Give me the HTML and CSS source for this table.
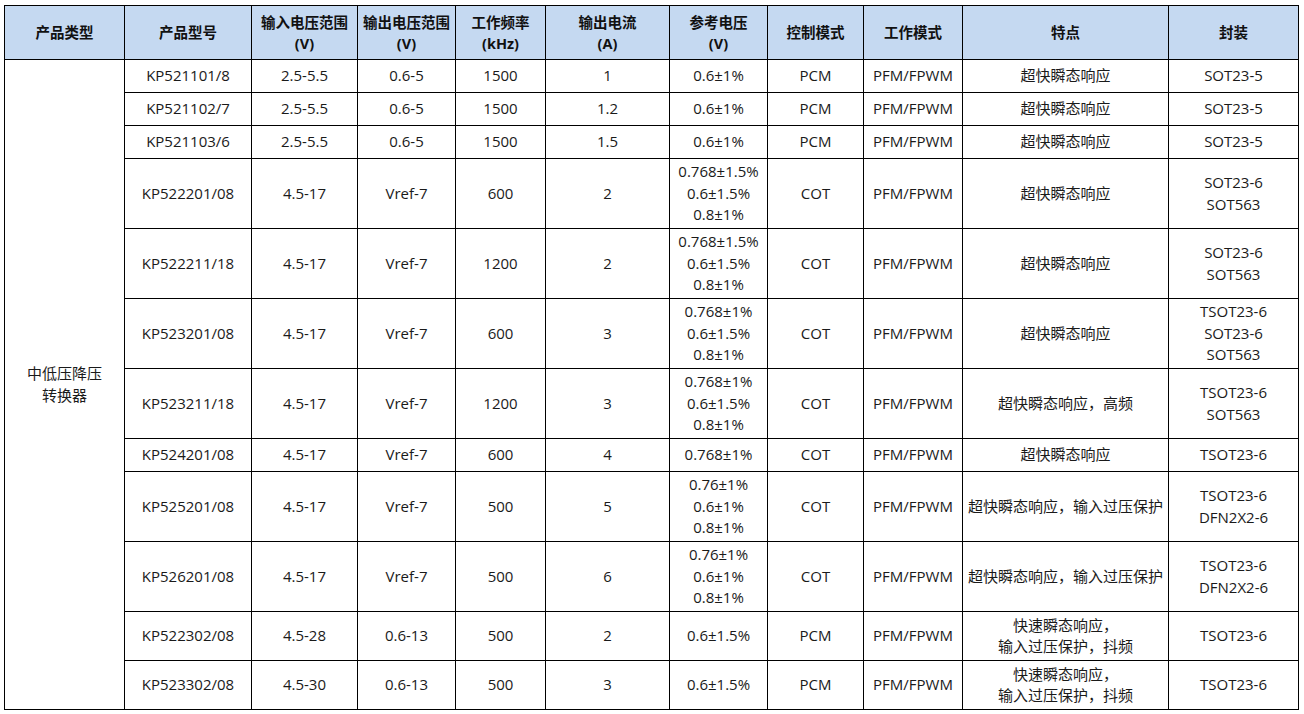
FILE: index.html
```html
<!DOCTYPE html>
<html lang="zh">
<head>
<meta charset="utf-8">
<title>中低压降压转换器</title>
<link rel="stylesheet" href="styles.css">
</head>
<body>
<table class="spec">
  <colgroup>
    <col class="c1"><col class="c2"><col class="c3"><col class="c4"><col class="c5"><col class="c6"><col class="c7"><col class="c8"><col class="c9"><col class="c10"><col class="c11">
  </colgroup>
  <thead>
    <tr class="hrow">
      <th>产品类型</th>
      <th>产品型号</th>
      <th>输入电压范围<br>(V)</th>
      <th>输出电压范围<br>(V)</th>
      <th>工作频率<br>(kHz)</th>
      <th>输出电流<br>(A)</th>
      <th>参考电压<br>(V)</th>
      <th>控制模式</th>
      <th>工作模式</th>
      <th>特点</th>
      <th>封装</th>
    </tr>
  </thead>
  <tbody>
    <tr class="r1">
      <td rowspan="13">中低压降压<br>转换器</td>
      <td>KP521101/8</td><td>2.5-5.5</td><td>0.6-5</td><td>1500</td><td>1</td><td>0.6±1%</td><td>PCM</td><td>PFM/FPWM</td><td>超快瞬态响应</td><td>SOT23-5</td>
    </tr>
    <tr class="r1">
      <td>KP521102/7</td><td>2.5-5.5</td><td>0.6-5</td><td>1500</td><td>1.2</td><td>0.6±1%</td><td>PCM</td><td>PFM/FPWM</td><td>超快瞬态响应</td><td>SOT23-5</td>
    </tr>
    <tr class="r1">
      <td>KP521103/6</td><td>2.5-5.5</td><td>0.6-5</td><td>1500</td><td>1.5</td><td>0.6±1%</td><td>PCM</td><td>PFM/FPWM</td><td>超快瞬态响应</td><td>SOT23-5</td>
    </tr>
    <tr class="r3">
      <td>KP522201/08</td><td>4.5-17</td><td>Vref-7</td><td>600</td><td>2</td><td>0.768±1.5%<br>0.6±1.5%<br>0.8±1%</td><td>COT</td><td>PFM/FPWM</td><td>超快瞬态响应</td><td>SOT23-6<br>SOT563</td>
    </tr>
    <tr class="r3">
      <td>KP522211/18</td><td>4.5-17</td><td>Vref-7</td><td>1200</td><td>2</td><td>0.768±1.5%<br>0.6±1.5%<br>0.8±1%</td><td>COT</td><td>PFM/FPWM</td><td>超快瞬态响应</td><td>SOT23-6<br>SOT563</td>
    </tr>
    <tr class="r3">
      <td>KP523201/08</td><td>4.5-17</td><td>Vref-7</td><td>600</td><td>3</td><td>0.768±1%<br>0.6±1.5%<br>0.8±1%</td><td>COT</td><td>PFM/FPWM</td><td>超快瞬态响应</td><td>TSOT23-6<br>SOT23-6<br>SOT563</td>
    </tr>
    <tr class="r3">
      <td>KP523211/18</td><td>4.5-17</td><td>Vref-7</td><td>1200</td><td>3</td><td>0.768±1%<br>0.6±1.5%<br>0.8±1%</td><td>COT</td><td>PFM/FPWM</td><td>超快瞬态响应，高频</td><td>TSOT23-6<br>SOT563</td>
    </tr>
    <tr class="r1">
      <td>KP524201/08</td><td>4.5-17</td><td>Vref-7</td><td>600</td><td>4</td><td>0.768±1%</td><td>COT</td><td>PFM/FPWM</td><td>超快瞬态响应</td><td>TSOT23-6</td>
    </tr>
    <tr class="r3">
      <td>KP525201/08</td><td>4.5-17</td><td>Vref-7</td><td>500</td><td>5</td><td>0.76±1%<br>0.6±1%<br>0.8±1%</td><td>COT</td><td>PFM/FPWM</td><td class="tight">超快瞬态响应，输入过压保护</td><td>TSOT23-6<br>DFN2X2-6</td>
    </tr>
    <tr class="r3">
      <td>KP526201/08</td><td>4.5-17</td><td>Vref-7</td><td>500</td><td>6</td><td>0.76±1%<br>0.6±1%<br>0.8±1%</td><td>COT</td><td>PFM/FPWM</td><td class="tight">超快瞬态响应，输入过压保护</td><td>TSOT23-6<br>DFN2X2-6</td>
    </tr>
    <tr class="r2">
      <td>KP522302/08</td><td>4.5-28</td><td>0.6-13</td><td>500</td><td>2</td><td>0.6±1.5%</td><td>PCM</td><td>PFM/FPWM</td><td>快速瞬态响应，<br>输入过压保护，抖频</td><td>TSOT23-6</td>
    </tr>
    <tr class="r2">
      <td>KP523302/08</td><td>4.5-30</td><td>0.6-13</td><td>500</td><td>3</td><td>0.6±1.5%</td><td>PCM</td><td>PFM/FPWM</td><td>快速瞬态响应，<br>输入过压保护，抖频</td><td>TSOT23-6</td>
    </tr>
  </tbody>
</table>
</body>
</html>
```

FILE: styles.css
```css
html, body {
  margin: 0;
  padding: 0;
  background: #ffffff;
}

body {
  padding: 5px 0 0 4px;
  font-family: "Open Sans", "Noto Sans CJK SC", sans-serif;
  font-size: 15px;
  color: #1a1a1a;
}

.spec {
  border-collapse: collapse;
  table-layout: fixed;
  width: 1294px;
}

.c1 { width: 120px; }
.c2 { width: 127px; }
.c3 { width: 106px; }
.c4 { width: 98px; }
.c5 { width: 90px; }
.c6 { width: 124px; }
.c7 { width: 98px; }
.c8 { width: 96px; }
.c9 { width: 99px; }
.c10 { width: 206px; }
.c11 { width: 130px; }

.spec th,
.spec td {
  border: 1px solid #000000;
  text-align: center;
  vertical-align: middle;
  padding: 0 2px;
  line-height: 21.5px;
  white-space: nowrap;
  overflow: hidden;
}

.spec th {
  background: #c5d9f1;
  font-weight: bold;
  font-size: 14.5px;
  line-height: 21px;
  color: #111111;
}

.hrow { height: 54px; }
.r1 { height: 33px; }
.r2 { height: 49px; }
.r3 { height: 70px; }

.spec td.tight {
  padding: 0;
}
```
